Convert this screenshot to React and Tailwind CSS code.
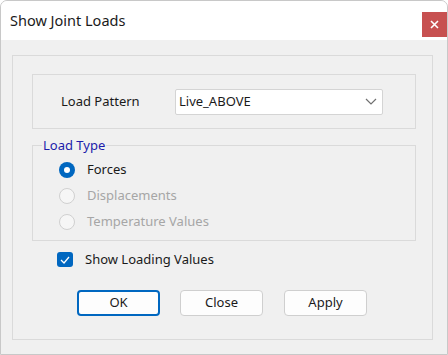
import React from 'react';

const font = { fontFamily: '"Segoe UI", "Noto Sans", "Open Sans", sans-serif' };

const Radio = ({ label, checked, disabled }) => (
  <div className="flex items-center h-[26px]">
    {checked ? (
      <span className="w-[16px] h-[16px] rounded-full bg-[#0067c0] flex items-center justify-center">
        <span className="w-[6px] h-[6px] rounded-full bg-white" />
      </span>
    ) : (
      <span className="w-[16px] h-[16px] rounded-full border border-[#d0d0d0] bg-[#f6f6f6]" />
    )}
    <span className={`ml-[12px] text-[13px] ${disabled ? 'text-[#a6a6a6]' : 'text-[#1a1a1a]'}`}>{label}</span>
  </div>
);

const Btn = ({ children, focused, className = '' }) => (
  <button
    className={`w-[83px] h-[26px] rounded-[4px] bg-[#fdfdfd] text-[13px] text-[#1a1a1a] ${
      focused ? 'border-2 border-[#0067c0]' : 'border border-[#cfcfcf]'
    } ${className}`}
  >
    {children}
  </button>
);

export default function App() {
  return (
    <div style={font} className="w-[448px] h-[355px] bg-[#f0f0f0] border border-[#c8c8c8] rounded-t-[7px] overflow-hidden flex flex-col">
      <div className="h-[39px] bg-white flex items-center justify-between shrink-0">
        <span className="ml-[9px] text-[14.5px] text-[#1a1a1a]">Show Joint Loads</span>
        <div className="w-[25px] h-[25px] bg-[#c75050] flex items-center justify-center mt-[8px]">
          <svg width="9" height="9" viewBox="0 0 9 9">
            <path d="M1 1L8 8M8 1L1 8" stroke="white" strokeWidth="1.6" />
          </svg>
        </div>
      </div>

      <div className="ml-[11px] mt-[15px] w-[421px] h-[285px] border border-[#dadada] flex flex-col">
        <div className="ml-[19px] mt-[18px] w-[384px] h-[55px] border border-[#dadada] flex items-center">
          <span className="ml-[28px] w-[114px] text-[13px] text-[#1a1a1a]">Load Pattern</span>
          <div className="w-[208px] h-[26px] bg-white border border-[#d4d4d4] rounded-[2px] flex items-center justify-between">
            <span className="ml-[3px] text-[13px] text-[#1a1a1a]">Live_ABOVE</span>
            <svg width="12" height="7" viewBox="0 0 12 7" className="mr-[5px]">
              <path d="M1 1L6 6L11 1" fill="none" stroke="#707070" strokeWidth="1.2" />
            </svg>
          </div>
        </div>

        <fieldset className="ml-[19px] mt-[7px] w-[384px] h-[105px] border border-[#dadada] pl-[26px]">
          <legend className="-ml-[17px] px-[1px] text-[13px] text-[#1c1cab]">Load Type</legend>
          <div className="flex flex-col mt-[1px]">
            <Radio label="Forces" checked />
            <Radio label="Displacements" disabled />
            <Radio label="Temperature Values" disabled />
          </div>
        </fieldset>

        <div className="ml-[44px] mt-[9px] flex items-center">
          <span className="w-[16px] h-[15px] rounded-[3px] bg-[#0067c0] flex items-center justify-center">
            <svg width="10" height="8" viewBox="0 0 10 8">
              <path d="M1 4L4 7L9 1" fill="none" stroke="white" strokeWidth="1.3" />
            </svg>
          </span>
          <span className="ml-[12px] text-[13px] text-[#1a1a1a]">Show Loading Values</span>
        </div>

        <div className="ml-[64px] mt-[20px] flex gap-[20px]">
          <Btn focused>OK</Btn>
          <Btn>Close</Btn>
          <Btn className="ml-[1px]">Apply</Btn>
        </div>
      </div>
    </div>
  );
}
